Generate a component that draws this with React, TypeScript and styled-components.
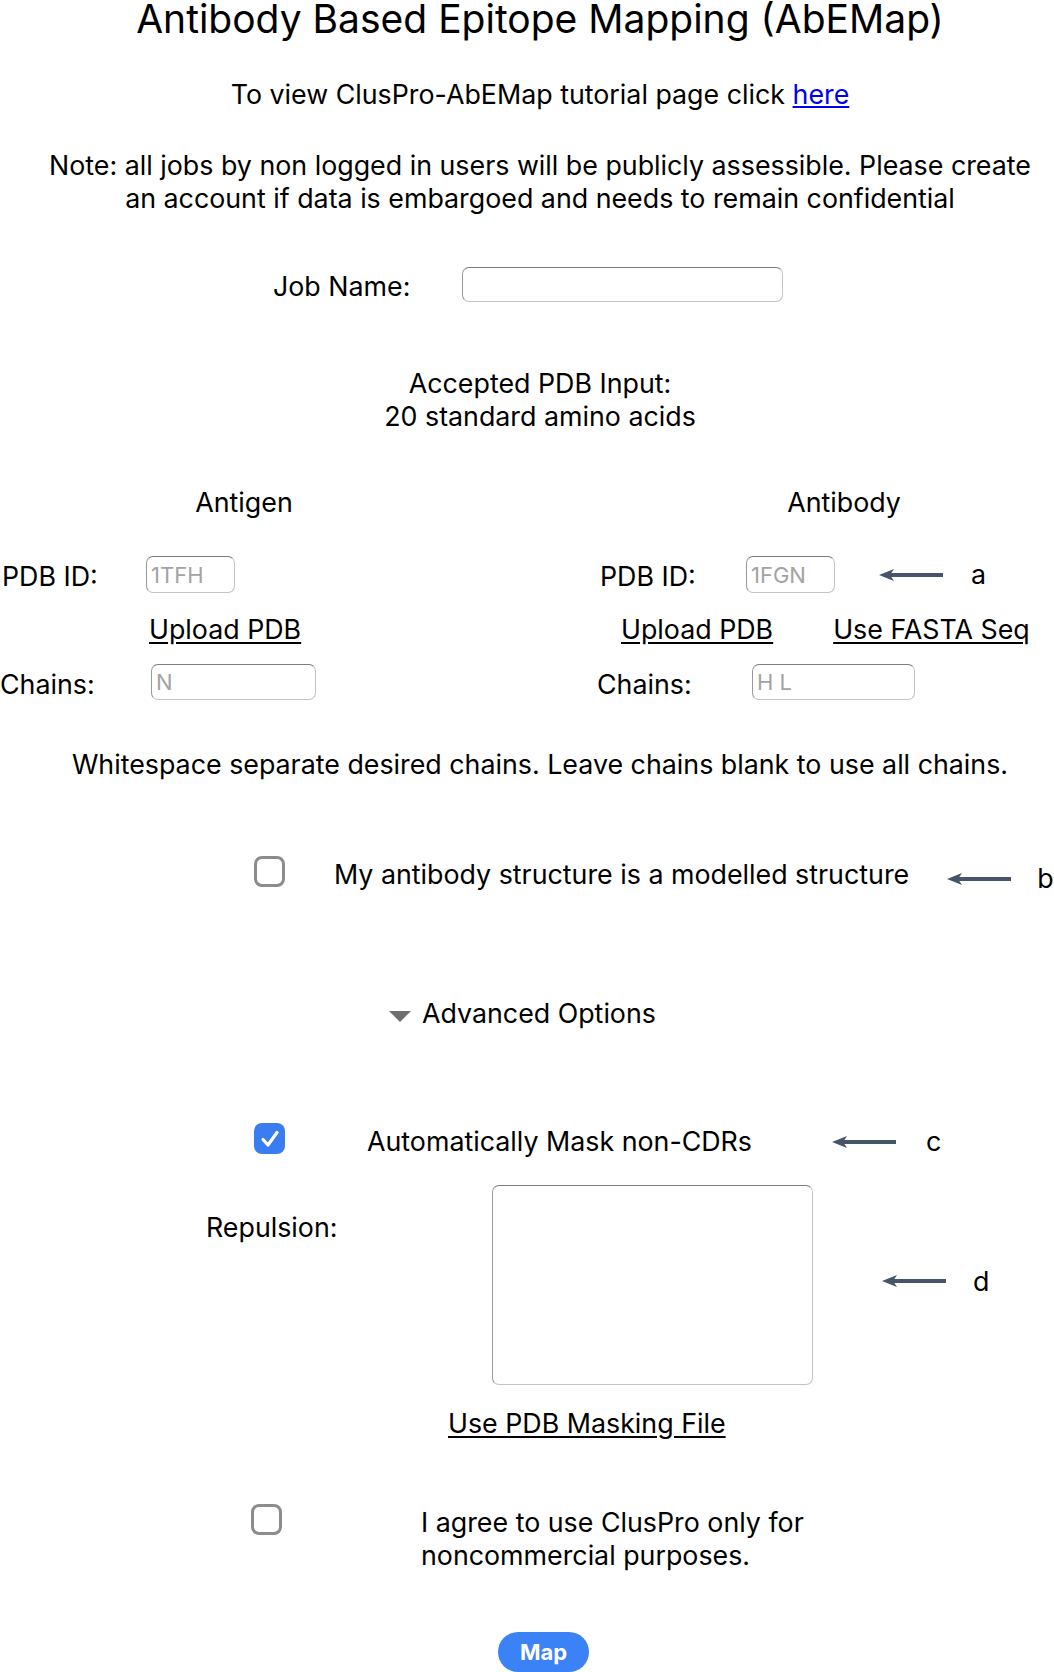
import styled, { createGlobalStyle } from 'styled-components'

const GlobalStyle = createGlobalStyle`
    body {
        margin: 0;
        overflow-x: hidden;
        background: #ffffff;
        color: #000000;
        font-family: Inter, "Liberation Sans", sans-serif;
        font-size: 26.8px;
    }
`

const Arrow = () => (
    <svg width="64" height="14" viewBox="0 0 64 14" fill="#475569">
        <path d="M0 7 L15 1 L11 7 L15 13 Z" />
        <rect x="10" y="5" width="54" height="4" />
    </svg>
)

const Tick = () => (
    <svg width="20" height="18" viewBox="0 0 20 18" fill="none">
        <path d="M3 9.5 L8 15 L17 2.5" stroke="#ffffff" strokeWidth="3.2" strokeLinecap="round" strokeLinejoin="round" />
    </svg>
)

const App = () => {
    return (
        <>
            <GlobalStyle />
            <Page>
                <Title>Antibody Based Epitope Mapping (AbEMap)</Title>
                <Centered $top={35}>
                    To view ClusPro-AbEMap tutorial page click <BlueLink href="#">here</BlueLink>
                </Centered>
                <Centered $top={38}>
                    Note: all jobs by non logged in users will be publicly assessible. Please create<br />
                    an account if data is embargoed and needs to remain confidential
                </Centered>

                <JobRow>
                    <Label $width={189} $drop={2}>Job Name:</Label>
                    <TextInput $width={321} $height={35} />
                </JobRow>

                <Centered $top={65}>
                    Accepted PDB Input:<br />
                    20 standard amino acids
                </Centered>

                <Columns>
                    <Column>
                        <ColumnHead>Antigen</ColumnHead>
                        <FieldRow $top={37}>
                            <Label $width={146} $shift={2} $drop={2}>PDB ID:</Label>
                            <TextInput $width={89} $height={37} placeholder="1TFH" />
                        </FieldRow>
                        <LinkRow $indent={149}>
                            <Underlined href="#">Upload PDB</Underlined>
                        </LinkRow>
                        <FieldRow $top={18}>
                            <Label $width={151} $drop={2}>Chains:</Label>
                            <TextInput $width={165} $height={36} placeholder="N" />
                        </FieldRow>
                    </Column>
                    <Column>
                        <ColumnHead>Antibody</ColumnHead>
                        <FieldRow $top={37}>
                            <Label $width={146} $drop={2}>PDB ID:</Label>
                            <TextInput $width={89} $height={37} placeholder="1FGN" />
                            <Note $gap={44} $letterGap={28}>
                                <Arrow />
                                <span>a</span>
                            </Note>
                        </FieldRow>
                        <LinkRow $indent={21}>
                            <Underlined href="#">Upload PDB</Underlined>
                            <Underlined href="#">Use FASTA Seq</Underlined>
                        </LinkRow>
                        <FieldRow $top={18}>
                            <Label $width={152} $shift={-3} $drop={2}>Chains:</Label>
                            <TextInput $width={163} $height={36} placeholder="H L" />
                        </FieldRow>
                    </Column>
                </Columns>

                <Centered $top={48}>
                    Whitespace separate desired chains. Leave chains blank to use all chains.
                </Centered>

                <CheckRow $top={74} $indent={254}>
                    <Box />
                    <CheckText $gap={49} $drop={3}>My antibody structure is a modelled structure</CheckText>
                    <Note $gap={38} $letterGap={26} $drop={7}>
                        <Arrow />
                        <span>b</span>
                    </Note>
                </CheckRow>

                <Advanced>
                    <Caret />
                    Advanced Options
                </Advanced>

                <CheckRow $top={92} $indent={254}>
                    <Box $checked>
                        <Tick />
                    </Box>
                    <CheckText $gap={82} $drop={3}>Automatically Mask non-CDRs</CheckText>
                    <Note $gap={80} $letterGap={30} $drop={3}>
                        <Arrow />
                        <span>c</span>
                    </Note>
                </CheckRow>

                <RepulsionRow>
                    <RepulsionLabel>Repulsion:</RepulsionLabel>
                    <Area />
                    <Note $gap={69} $letterGap={27} $align="center" $drop={-4}>
                        <Arrow />
                        <span>d</span>
                    </Note>
                </RepulsionRow>

                <LinkRow $indent={448} $top={22}>
                    <Underlined href="#">Use PDB Masking File</Underlined>
                </LinkRow>

                <AgreeRow>
                    <Box />
                    <CheckText $gap={139} $drop={2}>
                        I agree to use ClusPro only for<br />
                        noncommercial purposes.
                    </CheckText>
                </AgreeRow>

                <ButtonRow>
                    <MapButton>Map</MapButton>
                </ButtonRow>
            </Page>
        </>
    )
}

export default App

const Page = styled.div`
    width: 1080px;
    line-height: 33px;
    padding-bottom: 20px;
`
const Title = styled.h1`
    margin: -5px 0 0;
    font-size: 39px;
    font-weight: 400;
    line-height: 48px;
    text-align: center;
`
const Centered = styled.div<{ $top: number }>`
    margin-top: ${p => p.$top}px;
    text-align: center;
`
const BlueLink = styled.a`
    color: #0000ee;
    text-decoration: underline;
`
const Underlined = styled.a`
    color: #000000;
    text-decoration: underline;
    text-underline-offset: 3px;
`
const JobRow = styled.div`
    display: flex;
    align-items: center;
    margin-top: 52px;
    padding-left: 273px;
`
const Label = styled.span<{ $width: number; $shift?: number; $drop?: number }>`
    flex: none;
    width: ${p => p.$width}px;
    margin-left: ${p => p.$shift ?? 0}px;
    margin-right: ${p => -(p.$shift ?? 0)}px;
    transform: translateY(${p => p.$drop ?? 0}px);
`
const TextInput = styled.input<{ $width: number; $height: number }>`
    box-sizing: border-box;
    width: ${p => p.$width}px;
    height: ${p => p.$height}px;
    padding: 0 4px;
    border: 1.5px solid #c4c4c4;
    border-top-color: #7d7d7d;
    border-left-color: #9a9a9a;
    border-radius: 7px;
    font-family: Inter, "Liberation Sans", sans-serif;
    font-size: 22px;
    background: #ffffff;
    outline: none;

    &::placeholder {
        color: #a3a3a3;
    }
`
const Columns = styled.div`
    display: grid;
    grid-template-columns: 488px 488px;
    column-gap: 112px;
    margin-top: 53px;
`
const Column = styled.div`
    display: flex;
    flex-direction: column;
`
const ColumnHead = styled.div`
    text-align: center;
`
const FieldRow = styled.div<{ $top: number }>`
    display: flex;
    align-items: center;
    margin-top: ${p => p.$top}px;
`
const LinkRow = styled.div<{ $indent: number; $top?: number }>`
    display: flex;
    gap: 60px;
    margin-top: ${p => p.$top ?? 20}px;
    padding-left: ${p => p.$indent}px;
    white-space: nowrap;
`
const Note = styled.div<{ $gap: number; $letterGap?: number; $align?: string; $drop?: number }>`
    display: flex;
    align-items: center;
    gap: ${p => p.$letterGap ?? 28}px;
    margin-left: ${p => p.$gap}px;
    align-self: ${p => p.$align ?? 'auto'};
    transform: translateY(${p => p.$drop ?? 0}px);
    white-space: nowrap;

    svg {
        flex: none;
    }
`
const CheckRow = styled.div<{ $top: number; $indent: number }>`
    display: flex;
    align-items: center;
    margin-top: ${p => p.$top}px;
    padding-left: ${p => p.$indent}px;
`
const Box = styled.span<{ $checked?: boolean }>`
    box-sizing: border-box;
    flex: none;
    display: inline-flex;
    align-items: center;
    justify-content: center;
    width: 31px;
    height: 31px;
    border-radius: 8px;
    border: ${p => (p.$checked ? 'none' : '3px solid #8c8c8c')};
    background: ${p => (p.$checked ? '#3a7cf1' : '#ffffff')};
`
const CheckText = styled.span<{ $gap: number; $drop?: number }>`
    margin-left: ${p => p.$gap}px;
    white-space: nowrap;
    transform: translateY(${p => p.$drop ?? 0}px);
`
const Advanced = styled.div`
    display: flex;
    align-items: center;
    gap: 11px;
    margin-top: 109px;
    padding-left: 389px;
`
const Caret = styled.span`
    width: 0;
    height: 0;
    margin-top: 5px;
    border-left: 11px solid transparent;
    border-right: 11px solid transparent;
    border-top: 11px solid #6e6e6e;
`
const RepulsionRow = styled.div`
    display: flex;
    align-items: flex-start;
    margin-top: 30px;
    padding-left: 206px;
`
const RepulsionLabel = styled.span`
    width: 286px;
    margin-top: 26px;
`
const Area = styled.textarea`
    box-sizing: border-box;
    width: 321px;
    height: 200px;
    border: 1.5px solid #c4c4c4;
    border-top-color: #7d7d7d;
    border-left-color: #9a9a9a;
    border-radius: 7px;
    resize: none;
    outline: none;
`
const AgreeRow = styled.div`
    display: flex;
    align-items: flex-start;
    margin-top: 64px;
    padding-left: 251px;
`
const ButtonRow = styled.div`
    display: flex;
    margin-top: 62px;
    padding-left: 498px;
`
const MapButton = styled.button`
    width: 91px;
    height: 40px;
    border: none;
    border-radius: 20px;
    background: #3b82f6;
    color: #ffffff;
    font-family: Inter, "Liberation Sans", sans-serif;
    font-size: 22px;
    font-weight: 700;
    cursor: pointer;
`
